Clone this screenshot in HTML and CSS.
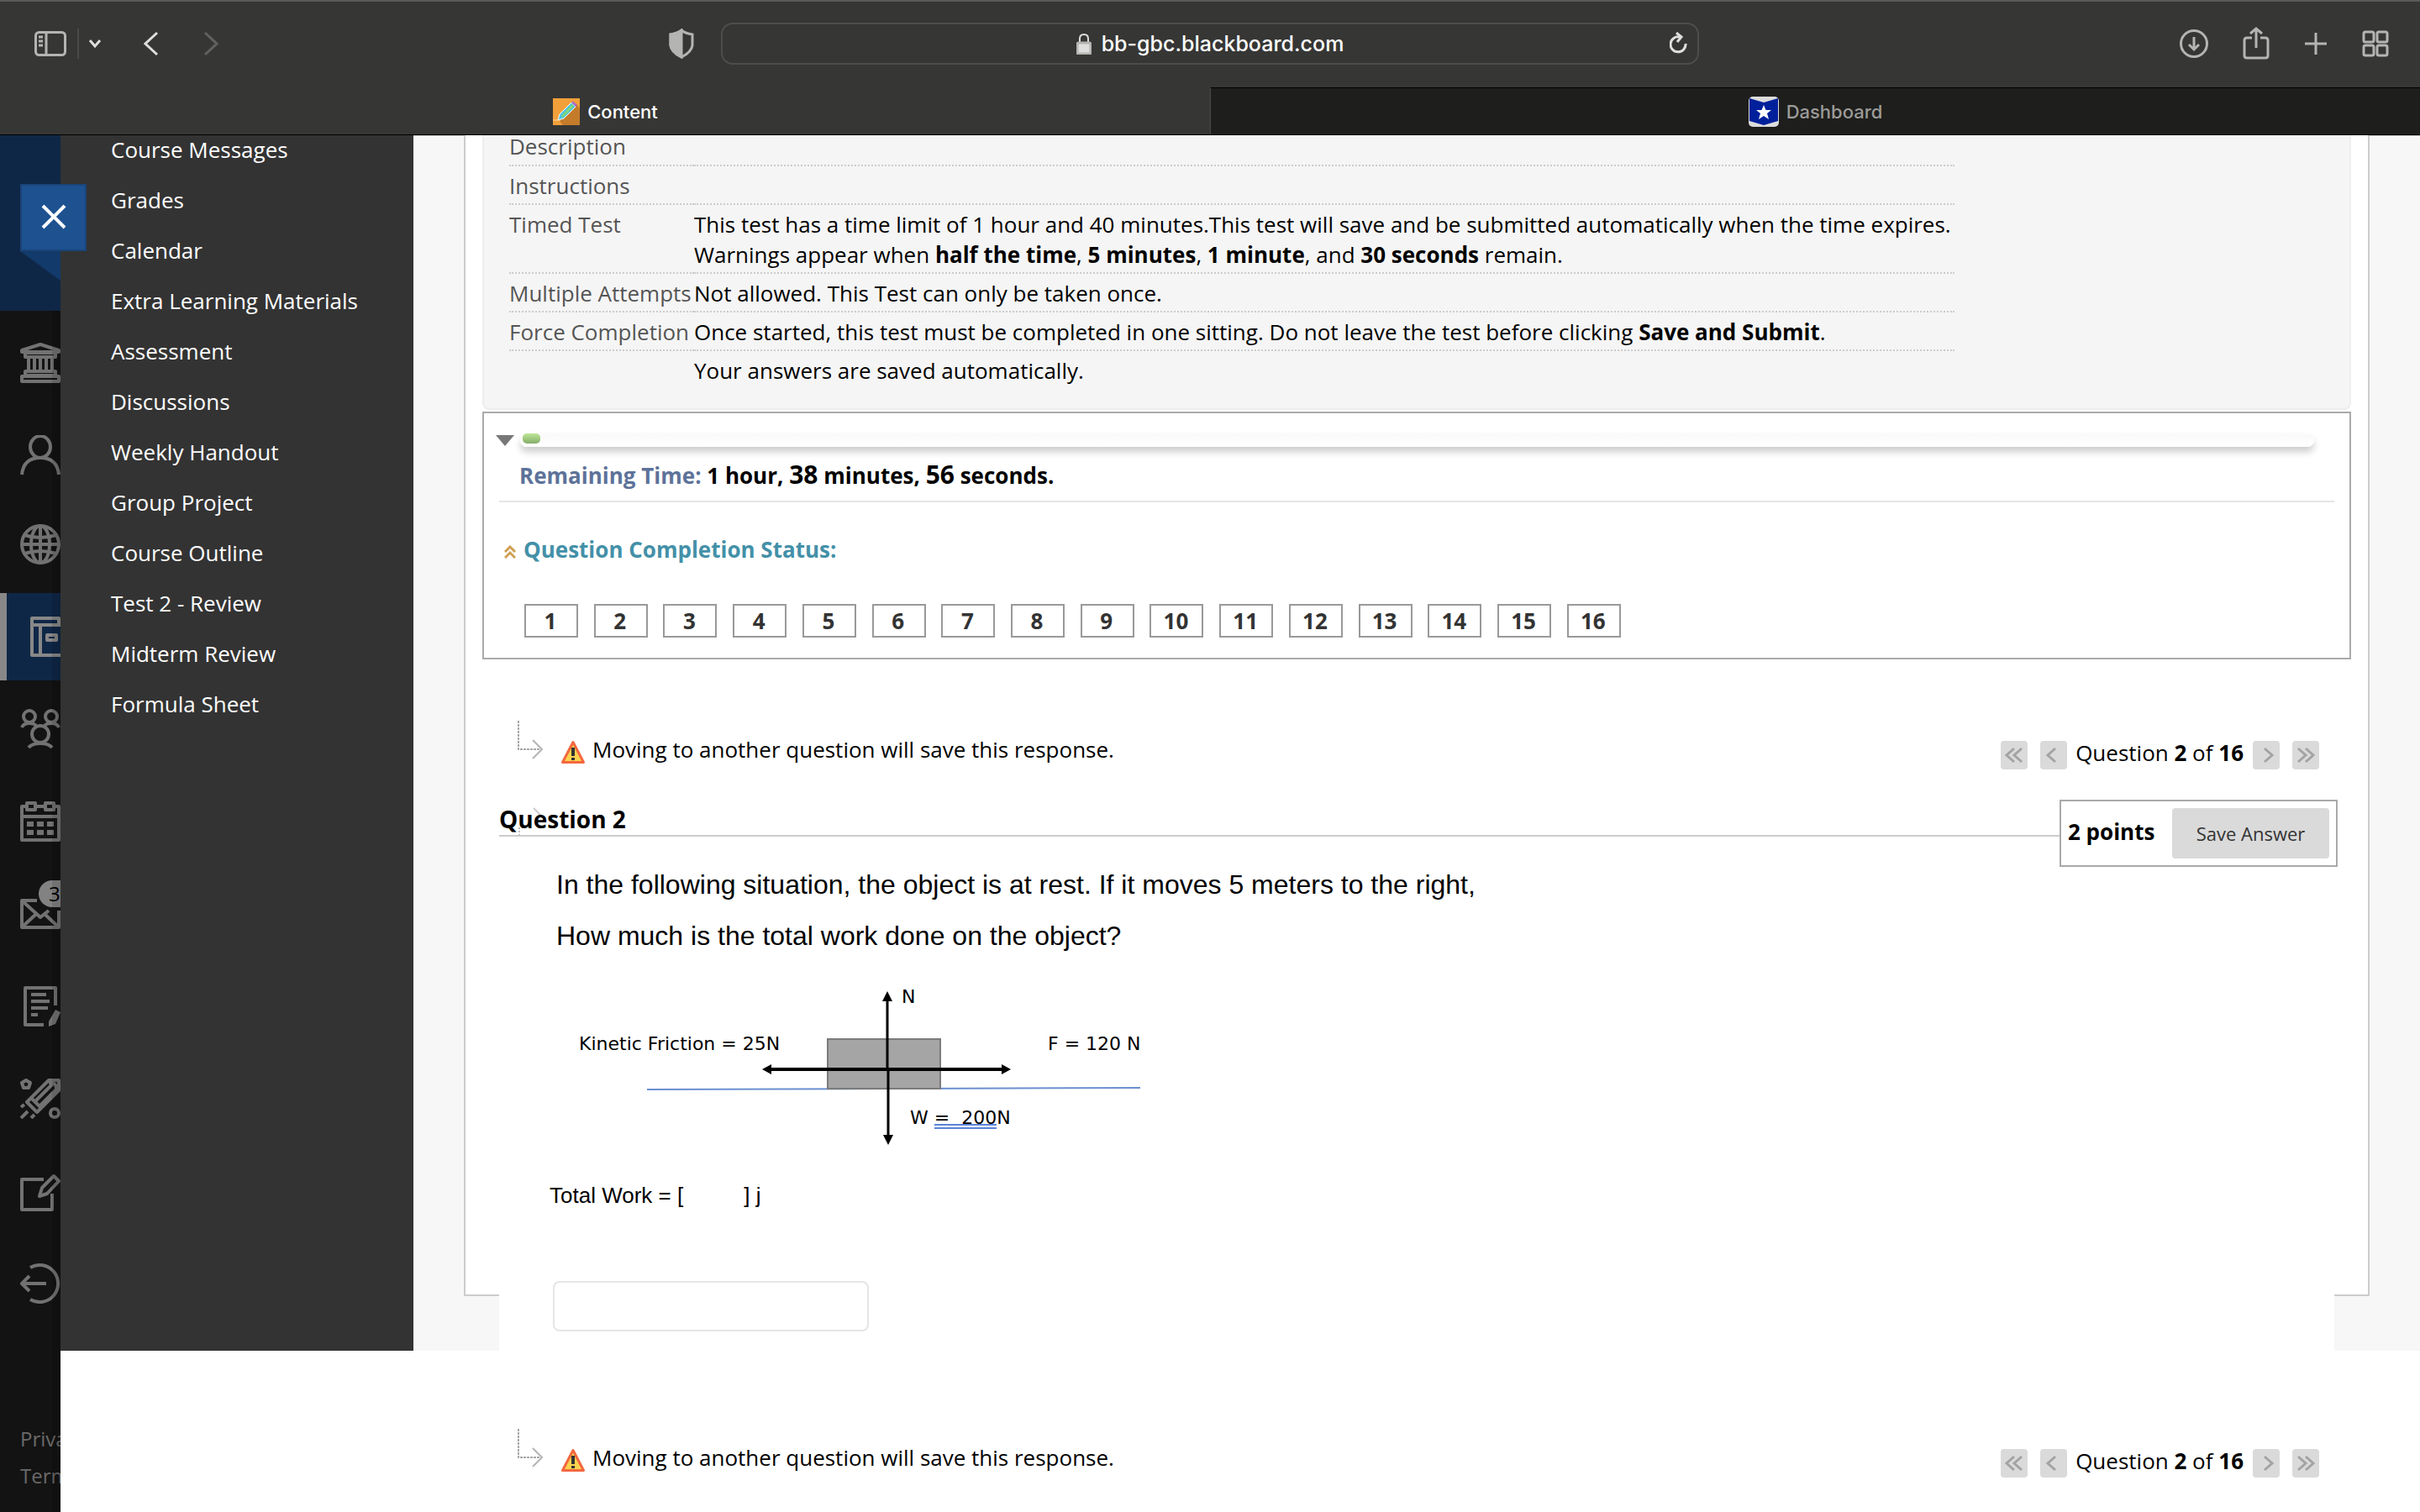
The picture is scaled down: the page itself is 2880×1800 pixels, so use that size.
FILE: index.html
```
<!DOCTYPE html>
<html lang="en">
<head>
<meta charset="UTF-8">
<meta name="viewport" content="width=device-width, initial-scale=1.0">
<title>Content</title>
<link rel="stylesheet" href="styles.css">
</head>
<body>

<!-- shared shapes -->
<svg class="defs" width="0" height="0" aria-hidden="true">
    <symbol id="elbow" viewBox="0 0 32 48">
        <path d="M2 0V34H27" fill="none" stroke="#a8a8a8" stroke-width="2" stroke-dasharray="3 1"/>
        <path d="M19 23L30 34L19 45" fill="none" stroke="#b4b4b4" stroke-width="2"/>
    </symbol>
    <symbol id="warning" viewBox="0 0 30 30">
        <path d="M15 2.5L27.5 26.5H2.5Z" fill="#fbd34e" stroke="#f4683f" stroke-width="3" stroke-linejoin="round"/>
        <path d="M15 9V19M15 21V24" stroke="#333" stroke-width="4"/>
    </symbol>
    <symbol id="single" viewBox="0 0 32 34">
        <path d="M18 9L9 17L18 25" fill="none" stroke="#a3a3a3" stroke-width="3"/>
    </symbol>
    <symbol id="double" viewBox="0 0 32 34">
        <path d="M16 9L7 17L16 25M25 9L16 17L25 25" fill="none" stroke="#a3a3a3" stroke-width="3"/>
    </symbol>
</svg>

<header class="browser">
    <div class="toolbar">
        <div class="tools-left">
            <button type="button" aria-label="Sidebar"><svg width="38" height="32" viewBox="0 0 38 32"><rect x="1.500" y="2.500" width="35" height="27" rx="4"/><path d="M14 2V30M5 8H10M5 13H10M5 18H10"/></svg></button>
            <span class="divider"></span>
            <button type="button" class="menu-btn" aria-label="Tab groups"><svg class="bright" width="16" height="12" viewBox="0 0 16 12"><path d="M2 2L8 9L14 2"/></svg></button>
            <button type="button" class="back-btn" aria-label="Back"><svg class="bright" width="18" height="30" viewBox="0 0 18 30"><path d="M16 2L2 15L16 28"/></svg></button>
            <button type="button" class="forward-btn" aria-label="Forward"><svg class="dim" width="18" height="30" viewBox="0 0 18 30"><path d="M2 2L16 15L2 28"/></svg></button>
            <button type="button" class="shield-btn" aria-label="Privacy report"><svg width="30" height="36" viewBox="0 0 30 36"><path d="M15 2Q20 6 28 7V20Q27 28 15 34Q3 28 2 20V7Q10 6 15 2Z"/><path class="solid" d="M15 2V34Q3 28 2 20V7Q10 6 15 2Z"/></svg></button>
        </div>
        <div class="address">
            <svg class="lock" width="18" height="26" viewBox="0 0 18 26"><path d="M4 12V7Q4 2 9 2T14 7V12" fill="none" stroke="#dedede" stroke-width="2"/><rect x="1" y="12" width="16" height="13" rx="2" fill="#dedede"/></svg>
            <span>bb-gbc.blackboard.com</span>
            <button type="button" class="reload" aria-label="Reload"><svg class="bright" width="22" height="28" viewBox="0 0 22 28"><path d="M19 14A9 9 0 1 1 12 6M8 1L14 6L9 12"/></svg></button>
        </div>
        <div class="tools-right">
            <button type="button" aria-label="Downloads"><svg width="36" height="36" viewBox="0 0 36 36"><circle cx="18" cy="18" r="15.500"/><path d="M18 10V25M12 19L18 25L24 19"/></svg></button>
            <button type="button" aria-label="Share"><svg width="32" height="42" viewBox="0 0 32 42"><path d="M11 14H5Q2 14 2 17V35Q2 38 5 38H27Q30 38 30 35V17Q30 14 27 14H21M16 26V3M9 9L16 3L23 9"/></svg></button>
            <button type="button" aria-label="New tab"><svg width="30" height="30" viewBox="0 0 30 30"><path d="M15 2V28M2 15H28"/></svg></button>
            <button type="button" aria-label="Tab overview"><svg width="32" height="32" viewBox="0 0 32 32"><rect x="2" y="2" width="12" height="12" rx="2"/><rect x="18" y="2" width="12" height="12" rx="2"/><rect x="2" y="18" width="12" height="12" rx="2"/><rect x="18" y="18" width="12" height="12" rx="2"/></svg></button>
        </div>
    </div>
    <nav class="tabs">
        <a class="tab active" href="#content">
            <svg width="32" height="32" viewBox="0 0 32 32"><rect width="32" height="32" fill="#f2a03a"/><path d="M28 7L32 12V32H12L7 26Z" fill="#c47c2a"/><path d="M8 19L22 5L27 10L13 24L6 26Z" fill="#4cc3e6" stroke="#fff" stroke-width="1"/><path d="M11 22L24 8" stroke="#7fd77a" stroke-width="3"/><path d="M22 5L24 3.500L29 8L27 10Z" fill="#a865c9"/><path d="M0 26H9" stroke="#fbd9a5" stroke-width="1"/></svg>
            Content
        </a>
        <a class="tab" href="#dashboard">
            <svg width="36" height="36" viewBox="0 0 36 36"><rect width="36" height="36" rx="5" fill="#dcdcdc"/><path d="M1 2L18 7L35 2V29L18 34L1 29Z" fill="#00209b"/><path d="M18 10L20.500 16H27L22 20L24 27L18 23L12 27L14 20L9 16H15.500Z" fill="#fff"/></svg>
            Dashboard
        </a>
    </nav>
</header>

<div class="page">
    <nav class="rail">
        <div class="rail-top">
            <span class="ribbon"></span>
            <button type="button" class="close-btn" aria-label="Close"><svg width="32" height="32" viewBox="0 0 32 32"><path d="M3 3L29 29M29 3L3 29" stroke="#fff" stroke-width="4"/></svg></button>
        </div>
        <ul class="rail-list">
            <li><a href="#institution" aria-label="Institution"><svg width="48" height="48" viewBox="0 0 48 48"><path d="M24 2L46 9V11H2V9ZM6 12H42V17H6ZM10 18V32M17 18V32M24 18V32M31 18V32M38 18V32M6 34H42V39H6ZM2 40H46V46H2Z"/></svg></a></li>
            <li class="short"><a href="#profile" aria-label="Profile"><svg width="48" height="48" viewBox="0 0 48 48"><ellipse cx="24" cy="14" rx="12" ry="13"/><path d="M2 47Q4 27 24 27T46 47"/></svg></a></li>
            <li><a href="#activity" aria-label="Activity"><svg width="48" height="48" viewBox="0 0 48 48"><circle cx="24" cy="24" r="22"/><ellipse cx="24" cy="24" rx="11" ry="22"/><path d="M24 2V46M2 24H46M5 13Q24 19 43 13M5 35Q24 29 43 35"/></svg></a></li>
            <li class="current"><a href="#courses" aria-label="Courses"><svg width="48" height="48" viewBox="0 0 48 48"><path d="M38 10H2V2H34V10M2 10V46H48M12 10V46M38 10H48"/><rect x="20" y="22" width="11" height="6"/></svg></a></li>
            <li><a href="#organizations" aria-label="Organizations"><svg width="48" height="48" viewBox="0 0 48 48"><circle cx="11" cy="9" r="7"/><circle cx="37" cy="9" r="7"/><path d="M2 22Q4 17 11 17T19 21M46 22Q44 17 37 17T29 21"/><circle cx="24" cy="30" r="10"/><path d="M10 46Q14 41 24 41T38 46"/></svg></a></li>
            <li><a href="#calendar" aria-label="Calendar"><svg width="48" height="48" viewBox="0 0 48 48"><path d="M8 6H2V46H46V6H40M18 6H30M2 18H46"/><rect x="8" y="2" width="10" height="8"/><rect x="30" y="2" width="10" height="8"/><path d="M8 27H16M20 27H28M32 27H40M8 37H16M20 37H28M32 37H40" stroke-width="6"/></svg></a></li>
            <li class="mail"><a href="#messages" aria-label="Messages"><svg width="48" height="48" viewBox="0 0 48 48"><path d="M20 8H2V40H46V20M3 9L24 28L34 20M3 39L18 25M45 39L30 25"/></svg><span class="badge">3</span></a></li>
            <li><a href="#grades" aria-label="Grades"><svg width="48" height="48" viewBox="0 0 48 48"><path d="M28 46H6V2H42V23M13 10H31M13 18H35M13 26H33M13 34H21"/><path class="fill" d="M42 28L48 31L42 45L34 48V42Z"/></svg></a></li>
            <li><a href="#tools" aria-label="Tools"><svg width="48" height="48" viewBox="0 0 48 48"><path d="M8 28L34 2H46V14L20 40ZM14 24L25 35M18 27L38 7M24 32L44 12M34 5Q44 4 43 14M1 34L5 31M1 47L9 39M13 47L17 43"/><circle cx="41" cy="41" r="5"/><path d="M7 2L12 5L10 11H4L2 5Z"/></svg></a></li>
            <li><a href="#post" aria-label="Compose"><svg width="48" height="48" viewBox="0 0 48 48"><path d="M28 10H2V46H38V27M40 6L46 12L32 27L23 30L26 20Z"/></svg></a></li>
            <li><a href="#signout" aria-label="Sign out"><svg width="48" height="48" viewBox="0 0 48 48"><path d="M12 5A22 22 0 1 1 12 43M31 24H2M11 15L2 24L11 33"/></svg></a></li>
        </ul>
        <div class="rail-links">
            <a href="#privacy">Privacy</a>
            <a href="#terms">Terms</a>
        </div>
    </nav>

    <div class="main">
        <div class="course">
            <aside class="course-menu">
                <ul>
                    <li><a href="#messages">Course Messages</a></li>
                    <li><a href="#grades">Grades</a></li>
                    <li><a href="#calendar">Calendar</a></li>
                    <li><a href="#extra">Extra Learning Materials</a></li>
                    <li><a href="#assessment">Assessment</a></li>
                    <li><a href="#discussions">Discussions</a></li>
                    <li><a href="#handout">Weekly Handout</a></li>
                    <li><a href="#project">Group Project</a></li>
                    <li><a href="#outline">Course Outline</a></li>
                    <li><a href="#test2">Test 2 - Review</a></li>
                    <li><a href="#midterm">Midterm Review</a></li>
                    <li><a href="#formula">Formula Sheet</a></li>
                </ul>
            </aside>

            <main class="content">
                <div class="panel">
                    <section class="test-info">
                        <table>
                            <tr><th scope="row">Description</th><td></td></tr>
                            <tr><th scope="row">Instructions</th><td></td></tr>
                            <tr><th scope="row">Timed Test</th><td>This test has a time limit of 1 hour and 40 minutes.This test will save and be submitted automatically when the time expires.<br>Warnings appear when <b>half the time</b>, <b>5 minutes</b>, <b>1 minute</b>, and <b>30 seconds</b> remain.</td></tr>
                            <tr><th scope="row">Multiple Attempts</th><td>Not allowed. This Test can only be taken once.</td></tr>
                            <tr><th scope="row">Force Completion</th><td>Once started, this test must be completed in one sitting. Do not leave the test before clicking <b>Save and Submit</b>.</td></tr>
                            <tr><th></th><td>Your answers are saved automatically.</td></tr>
                        </table>
                    </section>

                    <section class="status">
                        <div class="timer-row">
                            <button type="button" class="toggle" aria-label="Hide timer"><svg width="22" height="14" viewBox="0 0 22 14"><path d="M0 1H22L11 14Z" fill="#777"/></svg></button>
                            <div class="bar"><div class="bar-fill"></div></div>
                        </div>
                        <p class="remaining"><span>Remaining Time:</span> 1 hour, <big>38</big> minutes, <big>56</big> seconds.</p>
                        <a class="completion" href="#status">
                            <svg width="14" height="16" viewBox="0 0 14 16"><path d="M1 8L7 2L13 8M1 15L7 9L13 15" fill="none" stroke="#cfa052" stroke-width="3"/></svg>
                            Question Completion Status:
                        </a>
                        <div class="numbers">
                            <a href="#q1">1</a>
                            <a href="#q2">2</a>
                            <a href="#q3">3</a>
                            <a href="#q4">4</a>
                            <a href="#q5">5</a>
                            <a href="#q6">6</a>
                            <a href="#q7">7</a>
                            <a href="#q8">8</a>
                            <a href="#q9">9</a>
                            <a href="#q10">10</a>
                            <a href="#q11">11</a>
                            <a href="#q12">12</a>
                            <a href="#q13">13</a>
                            <a href="#q14">14</a>
                            <a href="#q15">15</a>
                            <a href="#q16">16</a>
                        </div>
                    </section>

                    <section class="question">
                        <div class="notice">
                            <svg class="elbow" width="32" height="48"><use href="#elbow"/></svg>
                            <svg class="warning" width="30" height="30"><use href="#warning"/></svg>
                            <p>Moving to another question will save this response.</p>
                            <div class="pager">
                                <button type="button" aria-label="First question"><svg width="32" height="34"><use href="#double"/></svg></button>
                                <button type="button" aria-label="Previous question"><svg width="32" height="34"><use href="#single"/></svg></button>
                                <span>Question <b>2</b> of <b>16</b></span>
                                <button type="button" class="next" aria-label="Next question"><svg width="32" height="34"><use href="#single"/></svg></button>
                                <button type="button" class="next" aria-label="Last question"><svg width="32" height="34"><use href="#double"/></svg></button>
                            </div>
                        </div>

                        <div class="question-head">
                            <svg class="ghost" width="32" height="34" viewBox="0 0 32 34"><path d="M19 1L29 11" fill="none" stroke="#ccc" stroke-width="2"/><path d="M2 24V34" stroke="#bbb" stroke-width="2" stroke-dasharray="2 2"/></svg>
                            <h3>Question 2</h3>
                            <div class="points">
                                <b>2 points</b>
                                <button type="button">Save Answer</button>
                            </div>
                        </div>

                        <div class="stem">
                            <p>In the following situation, the object is at rest. If it moves 5 meters to the right,</p>
                            <p>How much is the total work done on the object?</p>
                            <svg class="diagram" width="720" height="200" viewBox="0 0 720 200">
                                <path d="M108 127L695 125" stroke="#6a8fd0" stroke-width="2"/>
                                <rect x="323" y="67" width="134" height="59" fill="#a5a5a5" stroke="#7b7b7b" stroke-width="2"/>
                                <path d="M252 103H534" stroke="#000" stroke-width="4"/>
                                <path d="M394 20V103M395 103V183" stroke="#000" stroke-width="3"/>
                                <path d="M245 103L256 97V109ZM541 103L530 97V109ZM394 10L388 22H400ZM395 193L389 181H401Z"/>
                                <text x="411" y="24">N</text>
                                <text x="27" y="80">Kinetic Friction = 25N</text>
                                <text x="585" y="80">F = 120 N</text>
                                <text x="421" y="168">W =&#160; 200N</text>
                                <path d="M450 169H524M450 173H524" stroke="#5b83d6" stroke-width="2"/>
                            </svg>
                        </div>

                        <div class="answer">
                            <label for="answer">Total Work = [<span class="blank"></span>] j</label>
                            <input type="text" id="answer" name="answer">
                        </div>
                    </section>
                </div>
            </main>
        </div>

        <div class="below">
            <div class="notice">
                <svg class="elbow" width="32" height="48"><use href="#elbow"/></svg>
                <svg class="warning" width="30" height="30"><use href="#warning"/></svg>
                <p>Moving to another question will save this response.</p>
                <div class="pager">
                    <button type="button" aria-label="First question"><svg width="32" height="34"><use href="#double"/></svg></button>
                    <button type="button" aria-label="Previous question"><svg width="32" height="34"><use href="#single"/></svg></button>
                    <span>Question <b>2</b> of <b>16</b></span>
                    <button type="button" class="next" aria-label="Next question"><svg width="32" height="34"><use href="#single"/></svg></button>
                    <button type="button" class="next" aria-label="Last question"><svg width="32" height="34"><use href="#double"/></svg></button>
                </div>
            </div>
        </div>
    </div>
</div>

</body>
</html>
```
FILE: styles.css
```
* {
    box-sizing: border-box;
}

body {
    display: flex;
    flex-direction: column;
    height: 100vh;
    margin: 0;
    overflow: hidden;
    background: #fff;
    color: #000;
    font-family: "Open Sans", sans-serif;
    font-size: 26px;
    line-height: 36px;
}

a {
    color: inherit;
    text-decoration: none;
}

ul,
p,
h3 {
    margin: 0;
    padding: 0;
    list-style: none;
}

button {
    padding: 0;
    border: 0;
    background: none;
    font-family: inherit;
}

svg {
    display: block;
}

.defs {
    position: absolute;
}

/* browser bar */
.browser {
    position: relative;
    z-index: 5;
    flex: none;
    border-top: 2px solid #5a5a58;
    background: #363634;
    font-family: Inter, sans-serif;
}

.toolbar {
    display: grid;
    grid-template-columns: 1fr minmax(0, 1164px) 1fr;
    align-items: center;
    height: 102px;
    padding-bottom: 3px;
}

.toolbar svg {
    fill: none;
    stroke: #b4b4b2;
    stroke-width: 3;
}

.toolbar svg.bright {
    stroke: #dedede;
}

.toolbar svg.dim {
    stroke: #61615f;
}

.toolbar .solid {
    fill: #b4b4b2;
}

.tools-left,
.tools-right {
    display: flex;
    align-items: center;
}

.tools-left {
    padding: 0 32px 0 41px;
}

.divider {
    width: 2px;
    height: 36px;
    margin: 0 11px 0 13px;
    background: #4a4a48;
}

.back-btn {
    margin-left: 50px;
}

.forward-btn {
    margin-left: 53px;
}

.shield-btn {
    margin-left: auto;
}

.address {
    position: relative;
    display: flex;
    justify-content: center;
    align-items: center;
    gap: 12px;
    height: 50px;
    border: 2px solid #4d4d4b;
    border-radius: 14px;
    color: #fff;
    font-size: 25px;
    font-weight: 500;
}

.reload {
    position: absolute;
    right: 11px;
}

.tools-right {
    justify-content: flex-end;
    gap: 40px;
    padding-right: 37px;
}

.tabs {
    display: flex;
    height: 57px;
    border-bottom: 1px solid #000;
}

.tab {
    display: flex;
    flex: 1;
    justify-content: center;
    align-items: center;
    gap: 9px;
    border-top: 1px solid #000;
    border-left: 1px solid #4a4a48;
    background: #1e1e1c;
    color: #9b9b99;
    font-size: 22px;
    font-weight: 500;
}

.tab.active {
    border-color: transparent;
    background: none;
    color: #fff;
}

/* page */
.page {
    display: flex;
    flex: 1;
    min-height: 0;
}

.rail {
    position: relative;
    flex: none;
    width: 72px;
    background: #131313;
}

.rail::after {
    content: "";
    position: absolute;
    top: 0;
    right: 0;
    bottom: 0;
    width: 10px;
    background: rgba(0, 0, 0, 0.12);
    pointer-events: none;
}

.rail-top {
    position: relative;
    z-index: 3;
    height: 209px;
    margin-bottom: 10px;
    background: #0f2747;
}

.close-btn {
    position: absolute;
    top: 58px;
    left: 24px;
    display: flex;
    justify-content: center;
    align-items: center;
    width: 79px;
    height: 80px;
    padding-bottom: 3px;
    border: 2px solid #1a4478;
    background: #1d5190;
}

.ribbon {
    position: absolute;
    top: 138px;
    left: 24px;
    width: 48px;
    height: 35px;
    background: #123a6b;
    clip-path: polygon(0 0, 100% 0, 100% 100%);
}

.rail-list li {
    display: flex;
    align-items: center;
    height: 104px;
    margin-bottom: 6px;
    padding-left: 24px;
    overflow: hidden;
}

.rail-list li.short {
    margin-bottom: 2px;
}

.rail-list li.current {
    padding-left: 28px;
    border-left: 8px solid #888;
    background: #0f2747;
}

.rail-list svg {
    fill: none;
    stroke: #727272;
    stroke-width: 4;
    stroke-linejoin: round;
}

.rail-list .current svg {
    stroke: #888;
}

.rail-list .fill {
    fill: #727272;
    stroke: none;
}

.mail a {
    position: relative;
}

.badge {
    position: absolute;
    top: -16px;
    left: 22px;
    width: 44px;
    height: 32px;
    padding-left: 12px;
    border-radius: 16px;
    background: #828282;
    color: #000;
    font-size: 24px;
    line-height: 32px;
}

.rail-links {
    display: flex;
    flex-direction: column;
    gap: 8px;
    margin-top: 115px;
    padding-left: 24px;
    overflow: hidden;
    color: #6a6a6a;
    font-size: 24px;
}

.main {
    flex: 1;
    min-width: 0;
    overflow: hidden;
}

.course {
    display: flex;
}

.course-menu {
    flex: none;
    width: 420px;
    background: #333;
    color: #fff;
}

.course-menu ul {
    margin-top: -13px;
}

.course-menu a {
    display: block;
    padding: 12px 60px;
}

.content {
    flex: 1;
    padding: 0 60px 65px;
    border-top: 1px solid #c4c4c4;
    background: #f7f7f7;
}

.panel {
    padding: 0 20px;
    border: 2px solid #ccc;
    border-top: 0;
    background: #fff;
}

.test-info {
    margin-top: -11px;
    padding: 0 30px 24px;
    border: 2px solid #eee;
    border-top: 0;
    border-radius: 0 0 8px 8px;
    background: #f5f5f5;
}

.test-info table {
    border-collapse: collapse;
}

.test-info th,
.test-info td {
    height: 46px;
    padding: 5px 0 3px;
    border-bottom: 2px dotted #ccc;
    text-align: left;
    vertical-align: top;
}

.test-info th {
    width: 220px;
    color: #555;
    font-weight: normal;
    white-space: nowrap;
}

.test-info td {
    padding-right: 4px;
}

.test-info tr:last-child > * {
    height: 44px;
    border-bottom: 0;
}

/* timer and question list */
.status {
    margin-top: 2px;
    padding: 24px 18px;
    border: 2px solid #aaa;
}

.timer-row {
    display: flex;
    gap: 7px;
    margin: 0 24px 16px -4px;
}

.bar {
    flex: 1;
    height: 16px;
    padding: 0 3px;
    border-radius: 8px;
    background: linear-gradient(#f9f9f9, #fff);
    box-shadow: 0 6px 8px rgba(0, 0, 0, 0.2);
}

.bar-fill {
    width: 21px;
    height: 12px;
    border-radius: 5px;
    background: linear-gradient(#bce896, #86ac6a);
}

.remaining {
    height: 50px;
    padding-left: 24px;
    border-bottom: 2px solid #e5e5e5;
    font-weight: bold;
}

.remaining span {
    color: #5d7299;
}

.remaining big {
    font-size: 30px;
    line-height: 1;
}

.completion {
    display: flex;
    align-items: center;
    gap: 9px;
    margin: 38px 0 47px 6px;
    color: #4390a8;
    font-weight: bold;
}

.completion svg {
    margin-top: 6px;
}

.numbers {
    display: flex;
    justify-content: space-between;
    max-width: 1335px;
    padding-left: 30px;
}

.numbers a {
    width: 64px;
    height: 40px;
    padding-right: 2px;
    border: 2px solid #999;
    color: #333;
    font-weight: bold;
    text-align: center;
}

/* question */
.question {
    position: relative;
    margin: 73px 20px -67px;
    background: #fff;
}

.notice {
    display: flex;
    align-items: flex-start;
    height: 94px;
    padding: 0 18px 0 21px;
}

.warning {
    margin: 23px 8px 0 20px;
}

.notice p {
    margin-top: 16px;
}

.pager {
    display: flex;
    align-items: flex-end;
    gap: 15px;
    margin: 20px 0 0 auto;
}

.pager span {
    margin: 0 -4px 2px -5px;
}

.pager button {
    border-radius: 4px;
    background: #dadada;
}

.pager .next svg {
    transform: rotate(180deg);
}

.question-head {
    position: relative;
    display: flex;
    align-items: flex-start;
    margin-right: -4px;
}

/* leftover of the elbow arrow showing behind the heading */
.ghost {
    position: absolute;
    top: 9px;
    left: 22px;
}

.question-head h3 {
    position: relative;
    flex: 1;
    margin-top: 4px;
    border-bottom: 2px solid #ccc;
    font-size: 28px;
    line-height: 38px;
}

.points {
    display: flex;
    justify-content: space-between;
    align-items: center;
    width: 331px;
    height: 80px;
    padding: 8px;
    border: 2px solid #aaa;
}

.points b {
    margin-bottom: 4px;
}

.points button {
    width: 187px;
    height: 60px;
    border-radius: 4px;
    background: #dadada;
    color: #333;
    font-size: 22px;
}

.stem,
.answer {
    font-family: "Liberation Sans", sans-serif;
}

.stem {
    padding: 2px 0 0 68px;
}

.stem p {
    margin-bottom: 23px;
    font-size: 32px;
    line-height: 38px;
}

.diagram {
    margin-top: 37px;
    font-family: "DejaVu Sans", sans-serif;
    font-size: 22px;
}

.answer {
    display: flex;
    flex-direction: column;
    gap: 87px;
    padding: 38px 0 23px 60px;
    line-height: 30px;
}

.answer input {
    width: 376px;
    height: 60px;
    margin-left: 4px;
    border: 2px solid #e5e5e5;
    border-radius: 8px;
    font-size: 26px;
}

.blank {
    display: inline-block;
    width: 72px;
}

.below {
    margin: 93px 102px 0 522px;
}
```
